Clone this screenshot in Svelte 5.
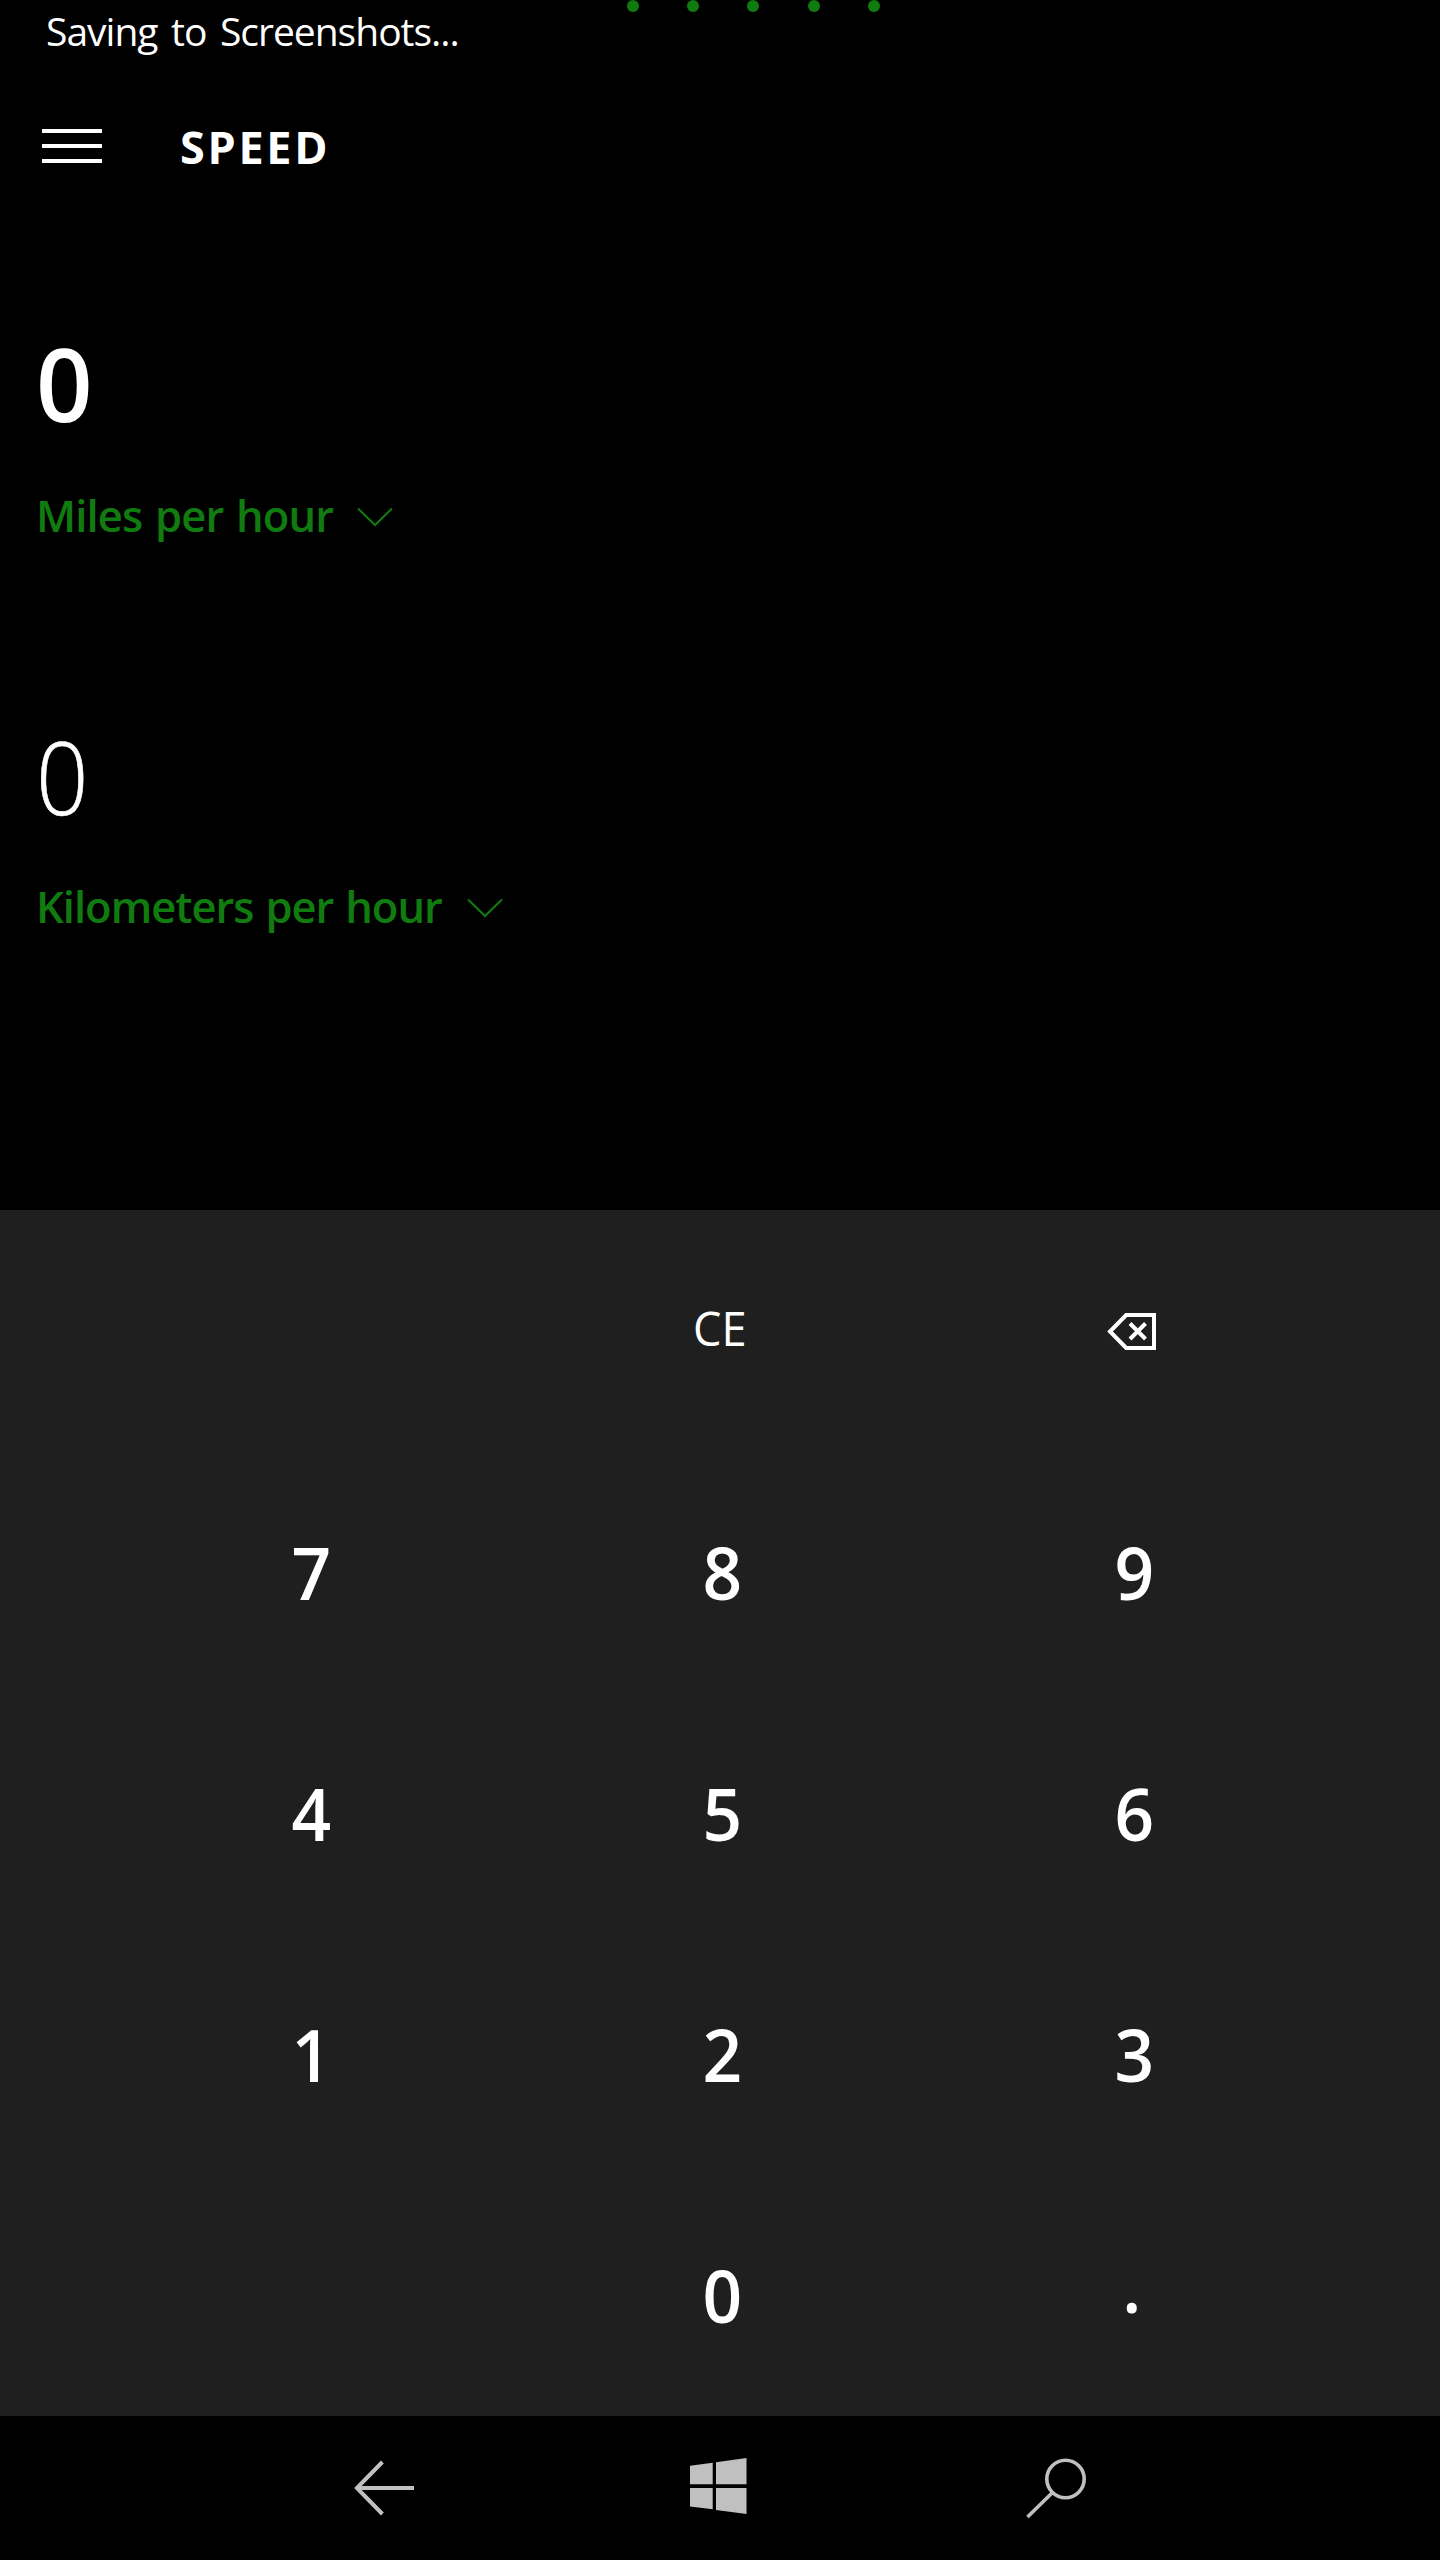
<script>
  const dots = [0, 1, 2, 3, 4];
  const keys = ['', 'CE', 'back', '7', '8', '9', '4', '5', '6', '1', '2', '3', '', '0', '.'];
  const readings = [
    { value: '0', unit: 'Miles per hour', active: true },
    { value: '0', unit: 'Kilometers per hour', active: false }
  ];
</script>

<div class="phone">
  <div class="progress">
    {#each dots as dot (dot)}<span class="dot"></span>{/each}
  </div>

  <div class="status">Saving to Screenshots...</div>

  <header class="header">
    <div class="menu"><span></span><span></span><span></span></div>
    <h1>SPEED</h1>
  </header>

  <main class="readings">
    {#each readings as r (r.unit)}
      <section class="reading" class:active={r.active}>
        <div class="value"><span>{r.value}</span></div>
        <div class="unit">
          <span class="name">{r.unit}</span>
          <svg class="chevron" width="36" height="20" viewBox="0 0 36 20">
            <path d="M1 1.5 18 18 35 1.5" fill="none" stroke="#107c10" stroke-width="2" />
          </svg>
        </div>
      </section>
    {/each}
  </main>

  <div class="keypad">
    {#each keys as key}
      <div class="key" class:small={key === 'CE'} class:point={key === '.'}>
        {#if key === 'back'}
          <svg class="erase" width="50" height="38" viewBox="0 0 50 38">
            <path d="M19.2 2H47V35H19.2L3 18.5Z" fill="none" stroke="#fff" stroke-width="4" />
            <path d="M23 10.5 38.5 26M38.5 10.5 23 26" fill="none" stroke="#fff" stroke-width="4" />
          </svg>
        {:else}
          <span>{key}</span>
        {/if}
      </div>
    {/each}
  </div>

  <nav class="navbar">
    <svg width="60" height="60" viewBox="0 0 60 60">
      <path d="M28.4 4 2.9 30 28.4 56M3 30H60" fill="none" stroke="#c0c0c0" stroke-width="4" />
    </svg>
    <svg class="start" width="57" height="57" viewBox="0 0 57 57">
      <path
        d="M0 7.7 22.7 4.7V26.3H0ZM26 4.2 56.5 0V26.3H26ZM0 30H22.7V51.3L0 48.5ZM26 30H56.5V56L26 52Z"
        fill="#c0c0c0"
      />
    </svg>
    <svg width="61" height="61" viewBox="0 0 61 61">
      <circle cx="39.5" cy="21" r="18.7" fill="none" stroke="#c0c0c0" stroke-width="3.6" />
      <path d="M26.5 34.5 1.5 59" fill="none" stroke="#c0c0c0" stroke-width="3.6" />
    </svg>
  </nav>
</div>

<style>
  :global(body) {
    margin: 0;
    background: #000;
  }

  .phone {
    position: relative;
    display: flex;
    flex-direction: column;
    width: 1440px;
    height: 2560px;
    overflow: hidden;
    background: #000;
    color: #fff;
    font-family: 'Open Sans', 'Noto Sans', sans-serif;
  }

  .progress {
    position: absolute;
    top: 0;
    left: 627px;
    display: flex;
    gap: 48.2px;
  }

  .dot {
    width: 12px;
    height: 12px;
    border-radius: 50%;
    background: #107c10;
  }

  .status {
    height: 61px;
    padding-left: 46px;
    font-size: 39px;
    line-height: 61px;
    letter-spacing: -1px;
    word-spacing: 4.4px;
  }

  .header {
    display: flex;
    align-items: center;
    height: 170px;
    padding-left: 42px;
  }

  .menu {
    display: flex;
    flex-direction: column;
    gap: 11.4px;
    width: 60px;
    margin-right: 78px;
  }

  .menu span {
    height: 3.6px;
    background: #fff;
  }

  h1 {
    margin: 0;
    padding-top: 2px;
    font-size: 45px;
    font-weight: 700;
    line-height: 60px;
    letter-spacing: 2.7px;
  }

  .readings {
    box-sizing: border-box;
    height: 898px;
    padding: 81px 0 0 36px;
  }

  .reading {
    height: 391px;
  }

  .value {
    height: 144px;
    font-size: 101px;
    font-weight: 300;
    line-height: 146px;
  }

  .value span {
    display: inline-block;
    transform: scaleX(0.91);
    transform-origin: 0 50%;
    -webkit-text-stroke: 0.6px #fff;
  }

  .active .value {
    font-weight: 600;
    line-height: 142px;
  }

  .active .value span {
    transform: scaleX(0.98);
    -webkit-text-stroke: 0;
  }

  .unit {
    display: flex;
    align-items: center;
    gap: 24.7px;
    height: 120px;
    color: #107c10;
    font-size: 43.5px;
    font-weight: 600;
    line-height: 120px;
    letter-spacing: -0.98px;
    word-spacing: 1.5px;
  }

  .active .unit {
    gap: 24px;
    letter-spacing: -0.85px;
    word-spacing: 2.2px;
  }

  .chevron {
    display: block;
    margin-top: 2px;
  }

  .keypad {
    display: grid;
    grid-template-columns: repeat(3, 411.5px);
    grid-auto-rows: 241.2px;
    box-sizing: border-box;
    height: 1206px;
    margin-top: 81px;
    padding-left: 105px;
    background: #1f1f1f;
    font-size: 71.5px;
    font-weight: 600;
  }

  .key {
    display: flex;
    align-items: center;
    justify-content: center;
    padding: 2px 0 0 1px;
    line-height: 100px;
  }

  .key span {
    display: inline-block;
    transform: scaleX(0.97);
  }

  .small {
    padding: 0 4px 6px 0;
    font-size: 47px;
    font-weight: 400;
  }

  .small span {
    transform: scaleX(0.96);
  }

  .point {
    padding: 0 4px 18px 0;
  }

  .erase {
    margin-left: -5px;
  }

  .navbar {
    display: flex;
    align-items: center;
    justify-content: space-between;
    box-sizing: border-box;
    height: 144px;
    padding: 0 353px 0 354px;
  }

  .start {
    margin: 0 4px 3px 0;
  }
</style>
